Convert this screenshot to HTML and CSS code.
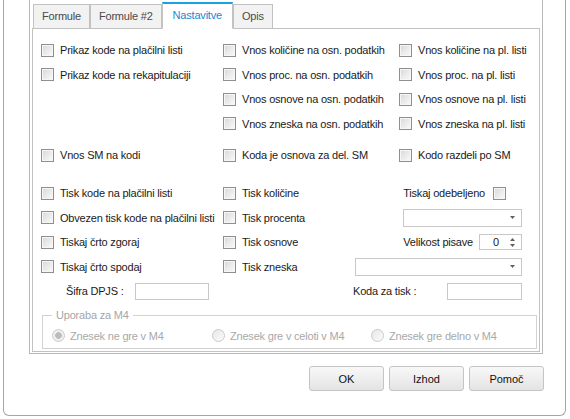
FILE: index.html
```html
<!DOCTYPE html>
<html lang="sl">
<head>
    <meta charset="UTF-8">
    <title>Nastavitve kode</title>
    <link rel="stylesheet" href="styles.css">
</head>
<body>

<div class="window">
    <div class="frame">
        <div class="tabs">
            <div class="tab">Formule</div>
            <div class="tab">Formule #2</div>
            <div class="tab active">Nastavitve</div>
            <div class="tab">Opis</div>
        </div>

        <div class="panel">
            <div class="grid">
                <label class="check"><span class="box"></span>Prikaz kode na plačilni listi</label>
                <label class="check"><span class="box"></span>Vnos količine na osn. podatkih</label>
                <label class="check"><span class="box"></span>Vnos količine na pl. listi</label>

                <label class="check"><span class="box"></span>Prikaz kode na rekapitulaciji</label>
                <label class="check"><span class="box"></span>Vnos proc. na osn. podatkih</label>
                <label class="check"><span class="box"></span>Vnos proc. na pl. listi</label>

                <div></div>
                <label class="check"><span class="box"></span>Vnos osnove na osn. podatkih</label>
                <label class="check"><span class="box"></span>Vnos osnove na pl. listi</label>

                <div></div>
                <label class="check"><span class="box"></span>Vnos zneska na osn. podatkih</label>
                <label class="check"><span class="box"></span>Vnos zneska na pl. listi</label>
            </div>

            <div class="grid sm">
                <label class="check"><span class="box"></span>Vnos SM na kodi</label>
                <label class="check"><span class="box"></span>Koda je osnova za del. SM</label>
                <label class="check"><span class="box"></span>Kodo razdeli po SM</label>
            </div>

            <div class="grid print">
                <label class="check"><span class="box"></span>Tisk kode na plačilni listi</label>
                <label class="check"><span class="box"></span>Tisk količine</label>
                <label class="side bold-opt">Tiskaj odebeljeno <span class="box"></span></label>

                <label class="check"><span class="box"></span>Obvezen tisk kode na plačilni listi</label>
                <label class="check"><span class="box"></span>Tisk procenta</label>
                <div class="side">
                    <div class="select short">
                        <svg width="5" height="3" viewBox="0 0 5 3"><path d="M0 0h5L2.5 3z" fill="#606060"/></svg>
                    </div>
                </div>

                <label class="check"><span class="box"></span>Tiskaj črto zgoraj</label>
                <label class="check"><span class="box"></span>Tisk osnove</label>
                <div class="side">
                    <span>Velikost pisave</span>
                    <div class="spin">
                        <span class="spin-value">0</span>
                        <svg width="5" height="9" viewBox="0 0 5 9"><path d="M0 3h5L2.5 0zM0 6h5L2.5 9z" fill="#606060"/></svg>
                    </div>
                </div>

                <label class="check"><span class="box"></span>Tiskaj črto spodaj</label>
                <label class="check"><span class="box"></span>Tisk zneska</label>
                <div class="side">
                    <div class="select wide">
                        <svg width="5" height="3" viewBox="0 0 5 3"><path d="M0 0h5L2.5 3z" fill="#606060"/></svg>
                    </div>
                </div>

                <div class="labeled dpjs">
                    <span class="caption">Šifra DPJS :</span>
                    <div class="field"></div>
                </div>
                <div></div>
                <div class="labeled">
                    <span class="caption wide-caption">Koda za tisk :</span>
                    <div class="field"></div>
                </div>
            </div>

            <fieldset class="group">
                <legend>Uporaba za M4</legend>
                <div class="radios">
                    <span class="radio"><span class="dot on"></span>Znesek ne gre v M4</span>
                    <span class="radio"><span class="dot"></span>Znesek gre v celoti v M4</span>
                    <span class="radio"><span class="dot"></span>Znesek gre delno v M4</span>
                </div>
            </fieldset>
        </div>
    </div>

    <div class="buttons">
        <button class="btn">OK</button>
        <button class="btn">Izhod</button>
        <button class="btn">Pomoč</button>
    </div>
</div>

</body>
</html>
```

FILE: styles.css
```css
body {
    margin: 0;
    background-color: #fff;
    font-family: "Liberation Sans", Arial, sans-serif;
    font-size: 11px;
    letter-spacing: -0.2px;
    color: #1a1a1a;
}

.window {
    margin-left: 3px;
    width: 563px;
    height: 416px;
    box-sizing: border-box;
    border: 1px solid #a6a6a6;
    border-top: none;
    border-radius: 0 0 6px 6px;
}

.frame {
    margin-left: 25px;
    width: 514px;
    height: 354px;
    box-sizing: border-box;
    border: 1px solid #b8b8b8;
    border-top: none;
    padding: 0 2px 1px;
}

/* tab strip */
.tabs {
    display: flex;
    align-items: flex-end;
    height: 29px;
    margin-left: 1px;
}

.tab {
    box-sizing: border-box;
    height: 25px;
    padding: 0 8px;
    line-height: 23px;
    border: 1px solid #c2c2c2;
    background-color: #f2f2f2;
    color: #4a4a4a;
}

.tab.active {
    position: relative;
    z-index: 1;
    height: 27px;
    padding: 0 10px;
    border-top: 2px solid #1ba1e2;
    border-bottom-color: #fff;
    background-color: #fff;
    color: #1689d4;
}

.panel {
    margin-top: -1px;
    height: 324px;
    box-sizing: border-box;
    border: 1px solid #c2c2c2;
    padding: 9px 0 0 8px;
}

/* option rows */
.grid {
    display: grid;
    grid-template-columns: 182px 176px 1fr;
    grid-auto-rows: 24.5px;
}

.grid.sm {
    margin-top: 7px;
}

.grid.print {
    margin-top: 13.5px;
    grid-template-columns: 182px 130px 169px;
}

.check {
    display: flex;
    align-items: center;
    gap: 6px;
    white-space: nowrap;
}

.box {
    flex: none;
    width: 13px;
    height: 13px;
    box-sizing: border-box;
    border: 1px solid #8e8f8f;
    box-shadow: inset 0 0 0 1px #f6f6f6;
    background: linear-gradient(135deg, #d8d8d8, #fbfbfb);
}

.side {
    display: flex;
    align-items: center;
    justify-content: flex-end;
    gap: 6px;
    white-space: nowrap;
}

.bold-opt {
    gap: 8px;
    padding-right: 16px;
}

.select {
    box-sizing: border-box;
    height: 18px;
    border: 1px solid #c8c8c8;
    display: flex;
    align-items: center;
    justify-content: flex-end;
    padding-right: 6px;
}

.select.short {
    width: 119px;
}

.select.wide {
    width: 167px;
}

.spin {
    box-sizing: border-box;
    width: 43px;
    height: 16px;
    border: 1px solid #c8c8c8;
    display: flex;
    align-items: center;
    justify-content: flex-end;
    gap: 11px;
    padding-right: 6px;
}

.labeled {
    display: flex;
    align-items: center;
}

.labeled.dpjs {
    padding-left: 25px;
}

.caption {
    width: 69px;
}

.caption.wide-caption {
    width: 94px;
}

.field {
    box-sizing: border-box;
    width: 74px;
    height: 17px;
    border: 1px solid #c8c8c8;
}

.labeled .wide-caption + .field {
    width: 75px;
}

/* disabled group box */
.group {
    margin: 5px 0 0 1px;
    width: 495px;
    box-sizing: border-box;
    border: 1px solid #d2d2d2;
    padding: 6px 0 4px 9px;
}

.group legend {
    padding: 0 4px;
    line-height: 13px;
    color: #a6a6a6;
}

.radios {
    display: grid;
    grid-template-columns: 160px 159px 1fr;
    height: 16px;
    align-items: center;
}

.radio {
    display: flex;
    align-items: center;
    gap: 5px;
    color: #a8a8a8;
    white-space: nowrap;
}

.dot {
    flex: none;
    width: 13px;
    height: 13px;
    box-sizing: border-box;
    border-radius: 50%;
    border: 1px solid #cacaca;
    background: linear-gradient(135deg, #e6e6e6, #fcfcfc);
}

.dot.on {
    background: radial-gradient(circle, #bdbdbd 0 3px, #ececec 3.6px, #f8f8f8 100%);
}

/* dialog buttons */
.buttons {
    display: flex;
    justify-content: flex-end;
    gap: 5px;
    margin-top: 12px;
    padding-right: 21px;
}

.btn {
    width: 75px;
    height: 25px;
    box-sizing: border-box;
    padding: 0;
    border: 1px solid #c4c4c4;
    border-radius: 3px;
    background: linear-gradient(#f8f8f8, #e4e4e4);
    font: inherit;
    color: #111;
}
```
